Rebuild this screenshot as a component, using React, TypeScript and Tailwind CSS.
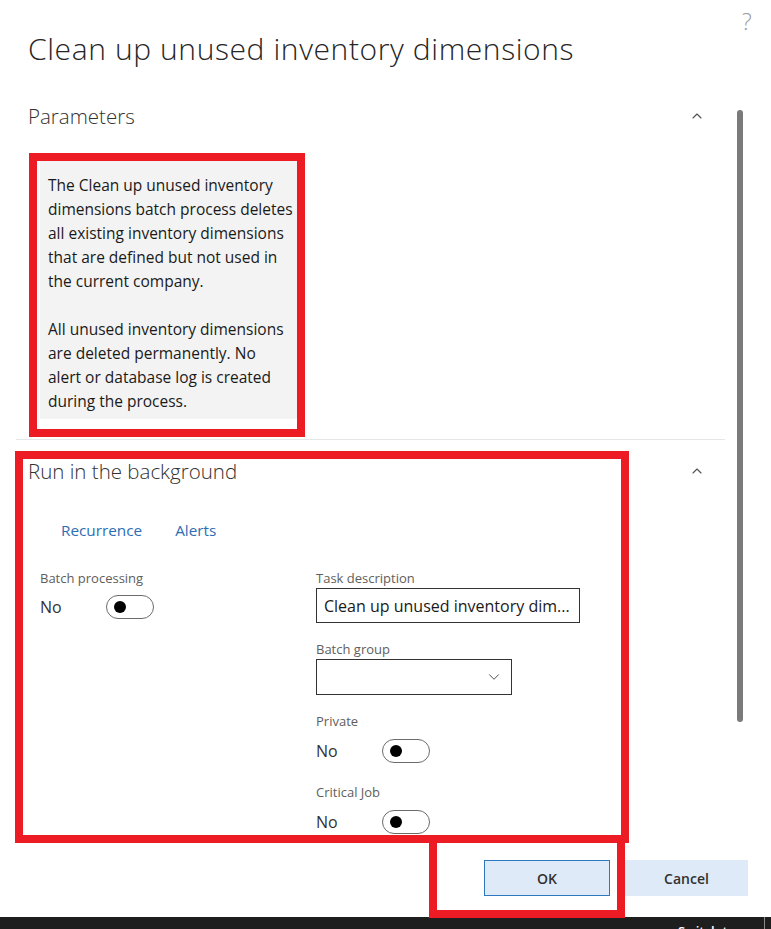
import { ChevronDown, ChevronUp } from "lucide-react";

const font = "font-['Segoe_UI','Open_Sans',sans-serif]";

function Toggle() {
  return (
    <span className="inline-flex h-[24px] w-[48px] items-center rounded-full border border-[#6b6b6b] bg-white pl-[7px]">
      <span className="h-[12px] w-[12px] rounded-full bg-black" />
    </span>
  );
}

function ToggleField({ label, labelGap = "mt-[10px]" }: { label: string; labelGap?: string }) {
  return (
    <div>
      <p className="text-[13px] leading-[16px] text-[#605e5c]">{label}</p>
      <div className={`${labelGap} flex items-center gap-[40px]`}>
        <span className="w-[26px] text-[16px] leading-[20px] text-[#323130]">No</span>
        <Toggle />
      </div>
    </div>
  );
}

function SectionHeader({ title }: { title: string }) {
  return (
    <div className="flex items-center justify-between pr-[20px]">
      <h2 className="text-[20.5px] font-light leading-[26px] text-[#323130]">{title}</h2>
      <ChevronUp className="h-[16px] w-[16px] text-[#555]" strokeWidth={1.75} />
    </div>
  );
}

const infoLines = [
  "The Clean up unused inventory",
  "dimensions batch process deletes",
  "all existing inventory dimensions",
  "that are defined but not used in",
  "the current company.",
  "",
  "All unused inventory dimensions",
  "are deleted permanently. No",
  "alert or database log is created",
  "during the process.",
];

export default function App() {
  return (
    <div className={`relative h-[929px] w-[771px] overflow-hidden bg-white ${font}`}>
      <span className="absolute left-[742px] top-[6px] text-[23px] font-light leading-[30px] text-[#9a9a9a]">?</span>

      <div className="flex h-[917px] flex-col">
        <h1 className="pl-[28px] pt-[31px] text-[30px] font-light leading-[36px] tracking-[0.6px] text-[#262626]">
          Clean up unused inventory dimensions
        </h1>

        <div className="flex-1 pl-[16px] pr-[46px]">
          {/* Parameters */}
          <div className="pl-[12px] pt-[36px]">
            <SectionHeader title="Parameters" />
          </div>
          <div className="pb-[20px] pl-[24px] pt-[30px]">
            <div className="w-[257px] bg-[#f3f3f3] pb-[6px] pl-[8px] pt-[14px] text-[15.5px] leading-[24px] text-[#1a1a1a]">
              {infoLines.map((line, i) => (
                <p key={i} className="h-[24px] whitespace-nowrap">
                  {line}
                </p>
              ))}
            </div>
          </div>
          <div className="h-px bg-[#e6e6e6]" />

          {/* Run in the background */}
          <div className="pl-[12px] pt-[18px]">
            <SectionHeader title="Run in the background" />
          </div>
          <div className="flex gap-[33px] pl-[45px] pt-[36px] text-[15.3px] leading-[20px] text-[#2e6db4]">
            <span>Recurrence</span>
            <span>Alerts</span>
          </div>

          <div className="flex pl-[24px] pt-[30px]">
            <div className="w-[276px]">
              <ToggleField label="Batch processing" labelGap="mt-[9px]" />
            </div>
            <div className="flex flex-col">
              <p className="text-[13px] leading-[16px] text-[#605e5c]">Task description</p>
              <div className="mt-[2px] flex h-[35px] w-[264px] items-center border border-[#333] px-[7px] text-[16px] text-[#1a1a1a]">
                <span className="truncate">Clean up unused inventory dim...</span>
              </div>

              <p className="mt-[18px] text-[13px] leading-[16px] text-[#605e5c]">Batch group</p>
              <div className="mt-[2px] flex h-[36px] w-[196px] items-center justify-end border border-[#333] pr-[8px]">
                <ChevronDown className="h-[18px] w-[18px] text-[#444]" strokeWidth={1.25} />
              </div>

              <div className="mt-[18px]">
                <ToggleField label="Private" />
              </div>
              <div className="mt-[21px]">
                <ToggleField label="Critical Job" />
              </div>
            </div>
          </div>
        </div>

        {/* Footer */}
        <div className="flex justify-end gap-[15px] pb-[21px] pr-[23px]">
          <button className="h-[36px] w-[126px] border border-[#2f78c0] bg-[#deeaf7] text-[14px] font-semibold text-[#323130]">
            OK
          </button>
          <button className="h-[36px] w-[123px] bg-[#deeaf7] text-[14px] font-semibold text-[#323130]">
            Cancel
          </button>
        </div>
      </div>

      {/* Status bar (cut off) */}
      <div className="relative h-[12px] overflow-hidden bg-[#1e1e1e]">
        <span className="absolute left-[678px] top-[6px] text-[13px] font-semibold leading-[16px] text-white">
          Switch to
        </span>
        <span className="absolute left-[764px] top-0 h-full w-px bg-[#8a8a8a]" />
      </div>

      {/* Scroll thumb */}
      <div className="absolute left-[737px] top-[110px] h-[612px] w-[6px] rounded-full bg-[#7a7a7a]" />

      {/* Annotation boxes */}
      <div className="pointer-events-none absolute left-[29px] top-[153px] h-[284px] w-[276px] border-[8px] border-[#ed1c24]" />
      <div className="pointer-events-none absolute left-[15px] top-[451px] h-[392px] w-[614px] border-[8px] border-[#ed1c24]" />
      <div className="pointer-events-none absolute left-[429px] top-[835px] h-[83px] w-[196px] border-[8px] border-[#ed1c24]" />
    </div>
  );
}
